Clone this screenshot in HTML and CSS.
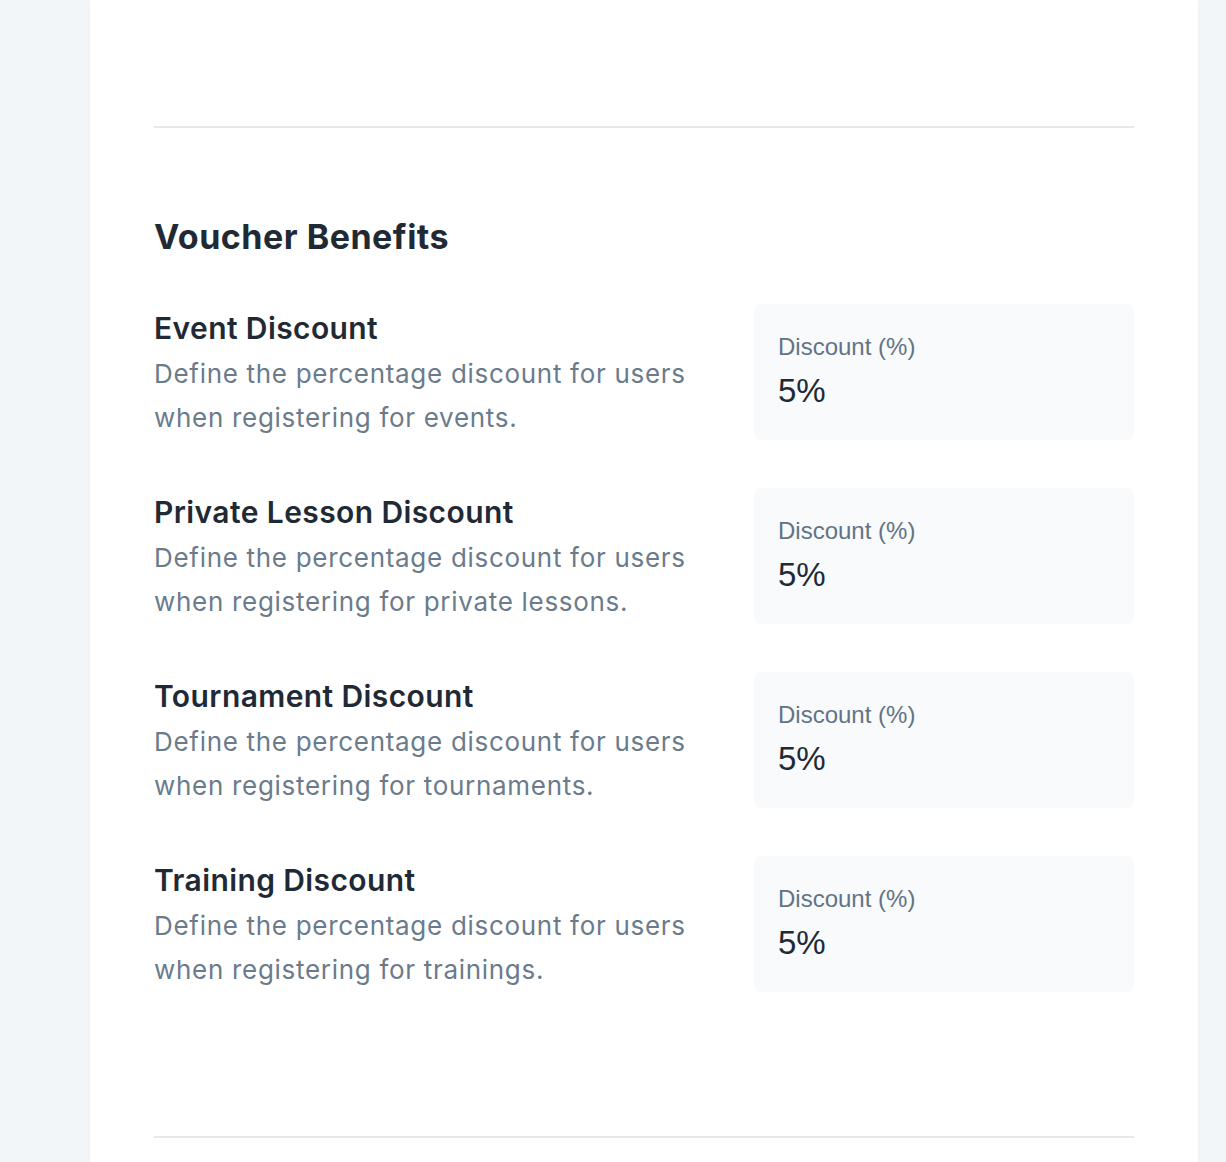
FILE: index.html
```html
<!DOCTYPE html>
<html lang="en">
<head>
<meta charset="utf-8">
<title>Voucher Benefits</title>
<link rel="stylesheet" href="styles.css">
</head>
<body>
<div class="page">
  <div class="card">
    <hr class="divider">
    <section class="benefits">
      <h2 class="title">Voucher Benefits</h2>
      <div class="rows">
        <div class="row">
          <div class="info">
            <h3 class="name">Event Discount</h3>
            <p class="desc">Define the percentage discount for users when registering for events.</p>
          </div>
          <div class="field">
            <div class="label">Discount (%)</div>
            <div class="value">5%</div>
          </div>
        </div>
        <div class="row">
          <div class="info">
            <h3 class="name">Private Lesson Discount</h3>
            <p class="desc">Define the percentage discount for users when registering for private lessons.</p>
          </div>
          <div class="field">
            <div class="label">Discount (%)</div>
            <div class="value">5%</div>
          </div>
        </div>
        <div class="row">
          <div class="info">
            <h3 class="name">Tournament Discount</h3>
            <p class="desc">Define the percentage discount for users when registering for tournaments.</p>
          </div>
          <div class="field">
            <div class="label">Discount (%)</div>
            <div class="value">5%</div>
          </div>
        </div>
        <div class="row">
          <div class="info">
            <h3 class="name">Training Discount</h3>
            <p class="desc">Define the percentage discount for users when registering for trainings.</p>
          </div>
          <div class="field">
            <div class="label">Discount (%)</div>
            <div class="value">5%</div>
          </div>
        </div>
      </div>
    </section>
    <hr class="divider bottom">
  </div>
</div>
</body>
</html>
```
FILE: styles.css
```css
html, body {
  margin: 0;
  padding: 0;
  background: #f3f6f9;
  height: 100%;
  overflow: hidden;
}
.page {
  padding-left: 90px;
}
.card {
  width: 1108px;
  height: 1162px;
  box-sizing: border-box;
  background: #ffffff;
  padding: 126px 64px 0 64px;
  box-shadow: 0 0 3px rgba(30, 50, 80, 0.05);
  font-family: "Inter", "Liberation Sans", sans-serif;
}
.divider {
  margin: 0;
  border: 0;
  height: 2px;
  background: #e6e9ec;
}
.divider.bottom {
  margin-top: 144px;
}
.benefits {
  padding-top: 87px;
}
.title {
  margin: 0;
  font-size: 34px;
  line-height: 44px;
  font-weight: 700;
  color: #1f2a35;
  letter-spacing: 0.5px;
}
.rows {
  margin-top: 45px;
  display: flex;
  flex-direction: column;
  gap: 48px;
}
.row {
  display: grid;
  grid-template-columns: 1fr 380px;
  column-gap: 40px;
  align-items: start;
}
.name {
  margin: 0;
  font-size: 30px;
  line-height: 48px;
  font-weight: 600;
  color: #1f2a35;
  letter-spacing: 0.4px;
}
.desc {
  margin: 0;
  font-size: 26px;
  line-height: 44px;
  color: #6b7b8b;
  letter-spacing: 0.7px;
  max-width: 556px;
}
.field {
  height: 136px;
  box-sizing: border-box;
  background: #f8fafc;
  border-radius: 8px;
  padding: 30px 24px 0 24px;
  font-family: "Liberation Sans", Arial, sans-serif;
}
.label {
  font-size: 24px;
  line-height: 26px;
  color: #637384;
}
.value {
  margin-top: 12px;
  font-size: 33px;
  line-height: 38px;
  color: #1f2a35;
}
```
